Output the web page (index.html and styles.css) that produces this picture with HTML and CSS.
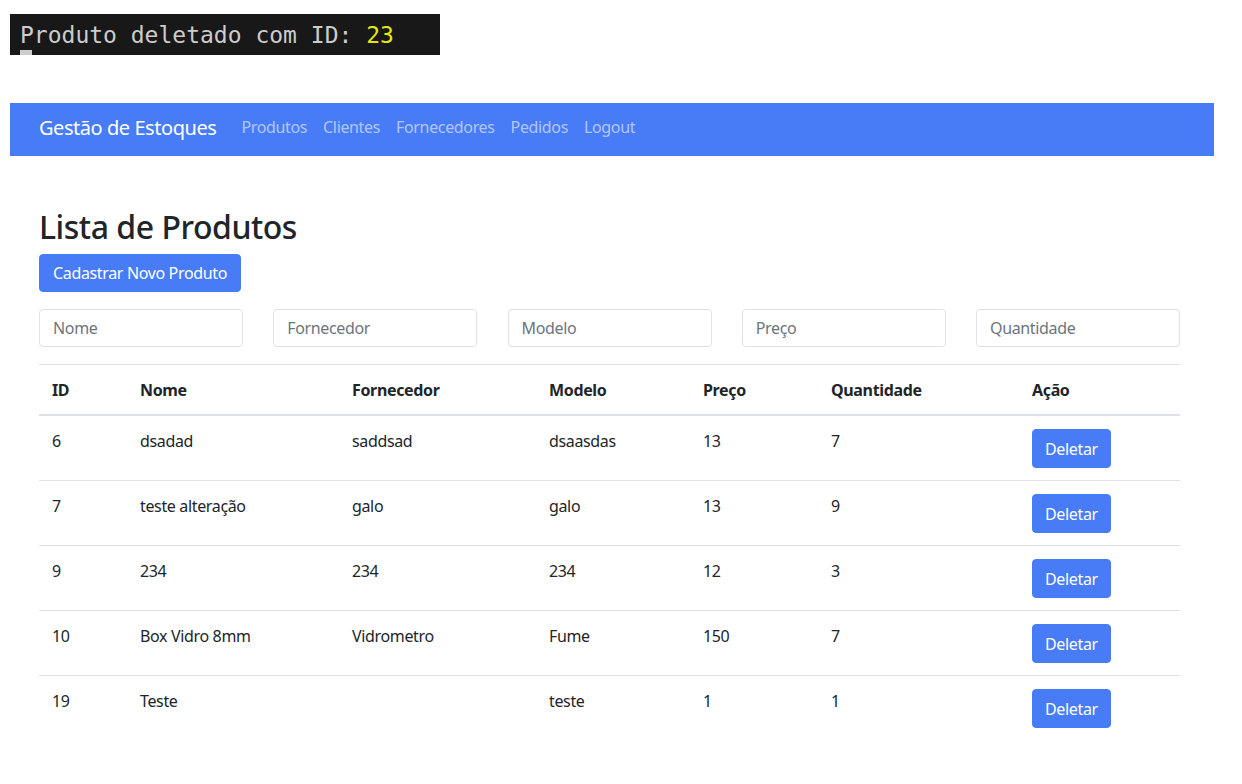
FILE: index.html
```html
<!DOCTYPE html>
<html lang="pt-BR">
<head>
<meta charset="utf-8">
<title>Gestão de Estoques</title>
<link rel="stylesheet" href="styles.css">
</head>
<body>
<div class="terminal">
  <div class="term-line">Produto deletado com ID: <span class="num">23</span></div>
  <div class="cursor"></div>
</div>

<nav class="navbar">
  <a class="brand" href="#">Gestão de Estoques</a>
  <ul class="nav-links">
    <li><a href="#">Produtos</a></li>
    <li><a href="#">Clientes</a></li>
    <li><a href="#">Fornecedores</a></li>
    <li><a href="#">Pedidos</a></li>
    <li><a href="#">Logout</a></li>
  </ul>
</nav>

<main class="container">
  <h2 class="title">Lista de Produtos</h2>
  <button class="btn">Cadastrar Novo Produto</button>

  <div class="filters">
    <input class="field" type="text" placeholder="Nome">
    <input class="field" type="text" placeholder="Fornecedor">
    <input class="field" type="text" placeholder="Modelo">
    <input class="field" type="text" placeholder="Preço">
    <input class="field" type="text" placeholder="Quantidade">
  </div>

  <table class="table">
    <colgroup>
      <col class="c-id"><col class="c-nome"><col class="c-forn"><col class="c-mod"><col class="c-preco"><col class="c-qtd"><col class="c-acao">
    </colgroup>
    <thead>
      <tr><th>ID</th><th>Nome</th><th>Fornecedor</th><th>Modelo</th><th>Preço</th><th>Quantidade</th><th>Ação</th></tr>
    </thead>
    <tbody>
      <tr><td>6</td><td>dsadad</td><td>saddsad</td><td>dsaasdas</td><td>13</td><td>7</td><td><button class="btn btn-del">Deletar</button></td></tr>
      <tr><td>7</td><td>teste alteração</td><td>galo</td><td>galo</td><td>13</td><td>9</td><td><button class="btn btn-del">Deletar</button></td></tr>
      <tr><td>9</td><td>234</td><td>234</td><td>234</td><td>12</td><td>3</td><td><button class="btn btn-del">Deletar</button></td></tr>
      <tr><td>10</td><td>Box Vidro 8mm</td><td>Vidrometro</td><td>Fume</td><td>150</td><td>7</td><td><button class="btn btn-del">Deletar</button></td></tr>
      <tr class="last"><td>19</td><td>Teste</td><td></td><td>teste</td><td>1</td><td>1</td><td><button class="btn btn-del">Deletar</button></td></tr>
    </tbody>
  </table>
</main>
</body>
</html>
```

FILE: styles.css
```css
* { box-sizing: border-box; }

body {
  margin: 0;
  background: #ffffff;
  font-family: "Noto Sans", "Open Sans", sans-serif;
  color: #212529;
  font-size: 16px;
  letter-spacing: -0.35px;
}

.terminal {
  margin: 14px 0 0 10px;
  width: 430px;
  height: 41px;
  background: #181818;
  padding: 6px 0 0 10px;
  overflow: hidden;
  letter-spacing: 0;
}

.term-line {
  font-family: "DejaVu Sans Mono", "Liberation Mono", monospace;
  font-size: 23px;
  line-height: 30px;
  color: #cccccc;
  white-space: pre;
}

.term-line .num { color: #e5e510; }

.cursor {
  width: 12px;
  height: 8px;
  background: #cccccc;
}

.navbar {
  margin: 48px 0 0 10px;
  width: 1204px;
  height: 53px;
  background: #487cf7;
  display: flex;
  align-items: center;
  padding: 0 29px 5px 29px;
}

.brand {
  color: #ffffff;
  text-decoration: none;
  font-size: 20px;
  letter-spacing: -0.45px;
  margin-right: 17px;
}

.nav-links {
  list-style: none;
  display: flex;
  margin: 0;
  padding: 0;
}

.nav-links a {
  display: block;
  color: rgba(255, 255, 255, 0.58);
  text-decoration: none;
  font-size: 16px;
  padding: 0 8px;
}

.container {
  padding: 52px 0 0 39px;
  width: 1180px;
}

.title {
  margin: 0 0 8px 0;
  font-size: 32px;
  font-weight: 500;
  line-height: 38px;
  letter-spacing: -0.47px;
}

.btn {
  font-family: inherit;
  font-size: 16px;
  letter-spacing: -0.35px;
  line-height: 24px;
  padding: 6px 13px;
  color: #ffffff;
  background: #487cf7;
  border: 1px solid #487cf7;
  border-radius: 4px;
  cursor: pointer;
}

.btn-del { padding: 7px 12px 6px; }

.filters {
  margin-top: 17px;
  display: flex;
  justify-content: space-between;
}

.field {
  width: 204px;
  height: 38px;
  font-family: inherit;
  font-size: 16px;
  letter-spacing: -0.35px;
  padding: 6px 13px;
  border: 1px solid #dee2e6;
  border-radius: 4px;
  color: #212529;
}

.field::placeholder { color: #6c757d; }

.table {
  margin-top: 17px;
  width: 1141px;
  border-collapse: collapse;
  table-layout: fixed;
}

.c-id { width: 88px; }
.c-nome { width: 212px; }
.c-forn { width: 197px; }
.c-mod { width: 154px; }
.c-preco { width: 128px; }
.c-qtd { width: 201px; }
.c-acao { width: 161px; }

.table th,
.table td {
  text-align: left;
  vertical-align: top;
  padding: 13px 13px 12px;
  line-height: 24px;
  font-size: 16px;
}

.table thead tr { border-top: 1px solid #dee2e6; }
.table th { font-weight: 700; border-bottom: 2px solid #dee2e6; }
.table tbody tr { border-bottom: 1px solid #dee2e6; }
.table tbody tr.last { border-bottom: none; }
```
